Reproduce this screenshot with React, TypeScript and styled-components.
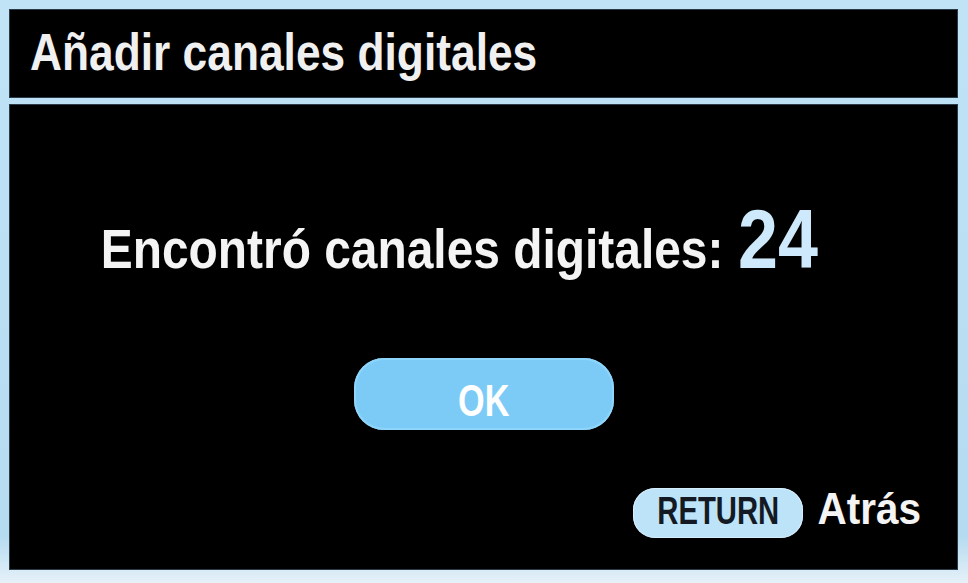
import styled, { createGlobalStyle } from 'styled-components';

const GlobalStyle = createGlobalStyle`
  html, body {
    margin: 0;
    padding: 0;
    background: #b9def2;
  }
  body {
    font-family: 'Liberation Sans', Arial, sans-serif;
  }
`;

const Screen = styled.div`
  width: 968px;
  height: 583px;
  box-sizing: border-box;
  padding: 10px 11px 14px 10px;
  background: linear-gradient(180deg, #c0e3f6 0%, #b5dbf0 92%, #e6f1f8 100%);
  display: flex;
  flex-direction: column;
  gap: 8px;
`;

const Panel = styled.div`
  background: #000;
  box-shadow: 0 0 0 1px #2a3a48;
`;

const Header = styled(Panel)`
  height: 87px;
  box-sizing: border-box;
  display: flex;
  align-items: center;
  padding: 0 0 3px 20px;
`;

/* the original face is a bold condensed grotesque; squeeze Liberation Sans to match */
const Condensed = styled.span<{ $scale: number; $origin?: string }>`
  display: inline-block;
  transform: scaleX(${(p) => p.$scale});
  transform-origin: ${(p) => p.$origin ?? 'center'} center;
`;

const Title = styled.h1`
  margin: 0;
  color: #f0f0f0;
  font-size: 52px;
  line-height: 1;
  font-weight: 700;
  white-space: nowrap;
`;

const Body = styled(Panel)`
  flex: 1;
  display: flex;
  flex-direction: column;
  align-items: center;
  padding: 92px 36px 0 0;
`;

const Message = styled.div`
  display: flex;
  align-items: baseline;
  gap: 17px;
  margin-right: 12px;
  color: #f4f4f4;
  font-weight: 700;
  font-size: 56px;
  line-height: 1;
  white-space: nowrap;
  transform: scaleX(0.855);
`;

const Count = styled.span`
  color: #cde9fb;
  font-size: 84px;
`;

const OkButton = styled.button`
  margin-top: 77px;
  margin-left: 36px;
  width: 260px;
  height: 72px;
  padding: 12px 0 0;
  border: none;
  border-radius: 30px;
  background: #7ccbf7;
  color: #fff;
  font-family: inherit;
  font-weight: 700;
  font-size: 45px;
  line-height: 1;
  box-shadow: inset 0 0 0 2px #8ed5fb;
`;

const Footer = styled.div`
  align-self: flex-end;
  margin-top: 56px;
  display: flex;
  align-items: center;
  gap: 3px;
`;

const KeyPill = styled.span`
  display: inline-flex;
  align-items: center;
  justify-content: center;
  box-sizing: border-box;
  width: 170px;
  height: 50px;
  padding-bottom: 5px;
  border-radius: 22px;
  background: #bde3f9;
  box-shadow: inset 0 0 0 1px #d6eefc;
  color: #141a24;
  font-weight: 700;
  font-size: 39px;
  line-height: 1;
`;

const KeyLabel = styled.span`
  color: #f4f4f4;
  font-weight: 700;
  font-size: 45px;
  line-height: 1;
  margin-bottom: 9px;
`;

export default function App() {
  return (
    <>
      <GlobalStyle />
      <Screen>
        <Header>
          <Title>
            <Condensed $scale={0.852} $origin="left">
              Añadir canales digitales
            </Condensed>
          </Title>
        </Header>
        <Body>
          <Message>
            <span>Encontró canales digitales:</span>
            <Count>24</Count>
          </Message>
          <OkButton>
            <Condensed $scale={0.76}>OK</Condensed>
          </OkButton>
          <Footer>
            <KeyPill>
              <Condensed $scale={0.75}>RETURN</Condensed>
            </KeyPill>
            <KeyLabel>
              <Condensed $scale={0.9} $origin="right">
                Atrás
              </Condensed>
            </KeyLabel>
          </Footer>
        </Body>
      </Screen>
    </>
  );
}
